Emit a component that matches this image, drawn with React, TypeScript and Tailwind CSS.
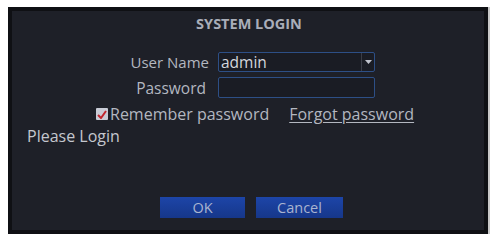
import React from "react";

export default function App() {
  return (
    <div className="w-[493px] h-[241px] bg-white pt-[7px] pl-[8px]" style={{ fontFamily: '"Open Sans", "Noto Sans", sans-serif' }}>
      <div className="w-[482px] h-[227px] bg-[#0f1014] border-r-2 border-r-[#c8c8c8] p-[4px]">
        <div className="w-full h-full bg-[#1e2028] flex flex-col text-[#b3b7c0]">
          <div className="text-center font-bold text-[14.5px] text-[#a9adb8] mt-[3px] leading-[20px] pl-[2px]">SYSTEM LOGIN</div>
          <div className="flex items-center mt-[18px]">
            <div className="w-[197px] text-right text-[15px] leading-[20px]">User Name</div>
            <div className="ml-[9px] w-[157px] h-[20px] border border-[#2d4f86] bg-[#1a1c24] rounded-[2px] flex items-center justify-between">
              <span className="text-[15.5px] leading-[18px] text-[#d4d6dc] pl-[2px]">admin</span>
              <div className="h-full border-l border-[#3a3d47] w-[13px] flex items-center justify-center">
                <svg width="7" height="4" viewBox="0 0 7 4"><path d="M0 0h7L3.5 4z" fill="#c0c3cc" /></svg>
              </div>
            </div>
          </div>
          <div className="flex items-center mt-[5px]">
            <div className="w-[194px] text-right text-[15.5px] leading-[20px]">Password</div>
            <div className="ml-[12px] w-[157px] h-[21px] border border-[#2d4f86] bg-[#1a1c24] rounded-[2px]"></div>
          </div>
          <div className="flex items-center mt-[6px] pl-[84px]">
            <div className="w-[12px] h-[12px] bg-[#c9ccd6] rounded-[1px] flex items-center justify-center">
              <svg width="10" height="9" viewBox="0 0 10 9"><path d="M1 5l3 3L9 1" stroke="#c0262e" strokeWidth="2" fill="none" /></svg>
            </div>
            <span className="ml-[2px] text-[16px] leading-[20px]">Remember password</span>
            <span className="ml-[20px] text-[16px] leading-[20px] underline underline-offset-2">Forgot password</span>
          </div>
          <div className="pl-[15px] mt-[2px] text-[16px] leading-[20px] text-[#c4c7ce]">Please Login</div>
          <div className="flex gap-[11px] mt-[51px] pl-[148px]">
            <div className="w-[85px] h-[21px] bg-gradient-to-b from-[#1d45a8] to-[#16378a] flex items-center justify-center text-[14.5px] text-[#a9b4d0]">OK</div>
            <div className="w-[87px] h-[21px] bg-gradient-to-b from-[#1d45a8] to-[#16378a] flex items-center justify-center text-[14.5px] text-[#a9b4d0]">Cancel</div>
          </div>
        </div>
      </div>
    </div>
  );
}
